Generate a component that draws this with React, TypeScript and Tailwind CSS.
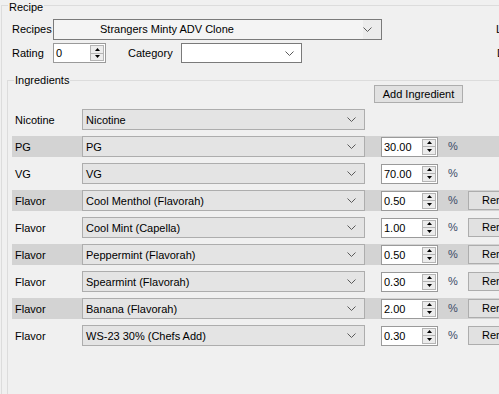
import React from "react";

type Row = {
  label: string;
  name: string;
  value?: string;
  band?: boolean;
  remove?: boolean;
};

const rows: Row[] = [
  { label: "Nicotine", name: "Nicotine" },
  { label: "PG", name: "PG", value: "30.00", band: true },
  { label: "VG", name: "VG", value: "70.00" },
  { label: "Flavor", name: "Cool Menthol (Flavorah)", value: "0.50", band: true, remove: true },
  { label: "Flavor", name: "Cool Mint (Capella)", value: "1.00", remove: true },
  { label: "Flavor", name: "Peppermint (Flavorah)", value: "0.50", band: true, remove: true },
  { label: "Flavor", name: "Spearmint (Flavorah)", value: "0.30", remove: true },
  { label: "Flavor", name: "Banana (Flavorah)", value: "2.00", band: true, remove: true },
  { label: "Flavor", name: "WS-23 30% (Chefs Add)", value: "0.30", remove: true },
];

function Chevron() {
  return (
    <svg width="9" height="5" viewBox="0 0 9 5" className="shrink-0">
      <path d="M0.5 0.5 L4.5 4.5 L8.5 0.5" fill="none" stroke="#5a5a5a" strokeWidth="1" />
    </svg>
  );
}

function Spinner() {
  return (
    <div className="flex flex-col w-[15px] h-full shrink-0 py-px pr-px">
      <div className="flex-1 flex items-center justify-center bg-[#ececec] border border-[#b4b4b4]">
        <svg width="5" height="3" viewBox="0 0 5 3">
          <path d="M2.5 0 L5 3 L0 3 Z" fill="#000" />
        </svg>
      </div>
      <div className="flex-1 flex items-center justify-center bg-[#ececec] border border-t-0 border-[#b4b4b4]">
        <svg width="5" height="3" viewBox="0 0 5 3">
          <path d="M0 0 L5 0 L2.5 3 Z" fill="#000" />
        </svg>
      </div>
    </div>
  );
}

function NumberBox({ value, className }: { value: string; className: string }) {
  return (
    <div className={`flex items-stretch bg-white border border-[#9a9a9a] ${className}`}>
      <span className="flex-1 pl-[2px] leading-[18px]">{value}</span>
      <Spinner />
    </div>
  );
}

function FlatCombo({ text, className }: { text: string; className: string }) {
  return (
    <div className={`flex items-center bg-[#e4e4e4] border border-[#adadad] ${className}`}>
      <span className="flex-1 pl-[3px] pt-px whitespace-nowrap">{text}</span>
      <span className="w-[17px] flex justify-start">
        <Chevron />
      </span>
    </div>
  );
}

export default function App() {
  return (
    <div className="w-[499px] h-[394px] overflow-hidden bg-[#f0f0f0] pt-[5px] font-['Liberation_Sans',Arial,sans-serif] text-[11px] text-black">
      {/* Recipe group */}
      <div className="relative ml-px w-[560px] h-[430px] border border-[#dcdcdc]">
        <span className="absolute left-[6px] top-[-5px] px-[1px] bg-[#f0f0f0] leading-[13px]">Recipe</span>

        <div className="flex items-center h-[21px] mt-[13px] pl-[10px]">
          <span className="w-[41px]">Recipes</span>
          <div className="flex items-stretch w-[329px] h-[21px] border border-[#7a7a7a] bg-[#f4f4f4]">
            <span className="flex-1 pl-[46px] leading-[19px] whitespace-nowrap">Strangers Minty ADV Clone</span>
            <span className="w-[18px] flex items-center justify-start bg-[#ececec]">
              <Chevron />
            </span>
          </div>
          <span className="ml-[114px]">L</span>
        </div>

        <div className="flex items-center h-[20px] mt-[3px] pl-[10px]">
          <span className="w-[41px]">Rating</span>
          <NumberBox value="0" className="w-[53px] h-[20px]" />
          <span className="ml-[22px] w-[53px]">Category</span>
          <div className="flex items-center w-[121px] h-[20px] bg-white border border-[#7a7a7a]">
            <span className="flex-1" />
            <span className="w-[16px]">
              <Chevron />
            </span>
          </div>
          <span className="ml-[195px]">D</span>
        </div>

        {/* Ingredients group */}
        <div className="relative ml-[5px] mt-[17px] w-[560px] h-[400px] border border-[#dcdcdc]">
          <span className="absolute left-[6px] top-[-7px] px-[1px] bg-[#f0f0f0] leading-[13px]">Ingredients</span>

          <div className="flex mt-[4px] ml-[366px]">
            <button className="w-[89px] h-[18px] bg-[#e1e1e1] border border-[#adadad] leading-[16px]">
              Add Ingredient
            </button>
          </div>

          <div className="flex flex-col gap-[6px] mt-[6px] ml-[4px]">
            {rows.map((r, i) => (
              <div key={i} className={`flex items-center h-[21px] w-[560px] ${r.band ? "bg-[#d3d3d3]" : ""}`}>
                <span className="w-[70px] pl-[3px] pt-px">{r.label}</span>
                <FlatCombo text={r.name} className="w-[283px] h-[21px]" />
                {r.value && <NumberBox value={r.value} className="ml-[16px] w-[57px] h-[20px]" />}
                {r.value && <span className="ml-[10px] w-[20px] text-[#3b4a66]">%</span>}
                {r.remove && (
                  <button className="w-[75px] h-[19px] bg-[#e1e1e1] border border-[#adadad] leading-[17px] text-left pl-[13px]">
                    Remove
                  </button>
                )}
              </div>
            ))}
          </div>
        </div>
      </div>
    </div>
  );
}
